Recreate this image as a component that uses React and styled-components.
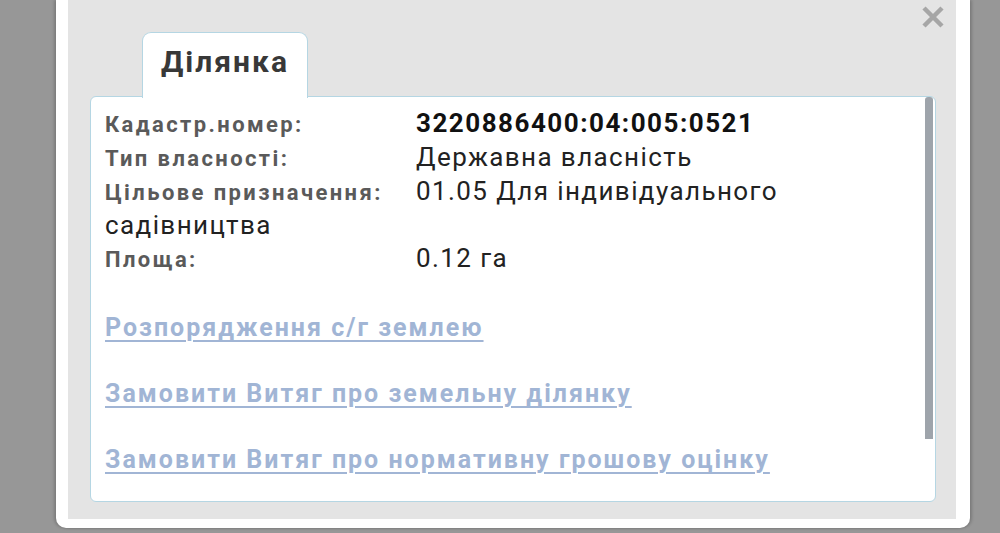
import React from "react";
import styled, { createGlobalStyle } from "styled-components";

const Global = createGlobalStyle`
  html, body { margin: 0; padding: 0; }
  body {
    width: 1000px;
    height: 533px;
    overflow: hidden;
    background: #979797;
    font-family: Roboto, "Noto Sans", "Liberation Sans", sans-serif;
  }
`;

const Page = styled.div`
  height: 533px;
  padding-left: 56px;
  box-sizing: border-box;
  display: flex;
  align-items: flex-start;
`;

const Dialog = styled.div`
  position: relative;
  width: 914px;
  height: 528px;
  box-sizing: border-box;
  background: #e4e4e4;
  border: 12px solid #ffffff;
  border-right-width: 14px;
  border-top: 0;
  border-bottom-width: 9px;
  border-radius: 0 0 10px 10px;
  box-shadow: -2px 0 3px rgba(0, 0, 0, 0.18), 2px 0 3px rgba(0, 0, 0, 0.18);
  padding: 32px 20px 0 22px;
  display: flex;
  flex-direction: column;
`;

const Close = styled.button`
  position: absolute;
  top: 5px;
  right: 11px;
  width: 24px;
  height: 24px;
  padding: 0;
  border: 0;
  background: transparent;
  display: flex;
`;

const TabBar = styled.div`
  display: flex;
  padding-left: 52px;
`;

const Tab = styled.div`
  position: relative;
  z-index: 1;
  height: 66px;
  box-sizing: border-box;
  margin-bottom: -2px;
  padding: 0 18px 8px 18px;
  display: flex;
  align-items: center;
  background: #ffffff;
  border: 1.5px solid #b5d6e3;
  border-bottom: 0;
  border-radius: 9px 9px 0 0;
  font-weight: 700;
  font-size: 30px;
  letter-spacing: 2px;
  color: #383838;
`;

const Panel = styled.div`
  position: relative;
  height: 406px;
  box-sizing: border-box;
  background: #ffffff;
  border: 1.5px solid #b5d6e3;
  border-radius: 6px;
  padding: 10px 14px;
`;

const Scrollbar = styled.div`
  position: absolute;
  top: 0;
  right: 2px;
  width: 8px;
  height: 342px;
  background: #9ea4ab;
  border-radius: 3px 3px 0 0;
`;

const Info = styled.div`
  line-height: 33px;
  font-size: 26px;
  color: #222222;
`;

const Row = styled.div`
  display: flex;
  align-items: baseline;
`;

const Label = styled.span`
  flex: 0 0 311px;
  font-size: 22px;
  font-weight: 700;
  letter-spacing: 2.4px;
  color: #5a5a5a;
`;

const Value = styled.span`
  font-weight: ${(p) => (p.$strong ? 700 : 400)};
  color: ${(p) => (p.$strong ? "#111111" : "#222222")};
  letter-spacing: ${(p) => (p.$strong ? "1.5px" : "1.4px")};
`;

const Links = styled.div`
  display: flex;
  flex-direction: column;
  gap: 33px;
  margin-top: 35px;
`;

const Link = styled.a`
  display: block;
  align-self: flex-start;
  line-height: 33px;
  font-size: 25px;
  font-weight: 700;
  letter-spacing: 2px;
  color: #a1b5d5;
  text-decoration: underline;
  text-decoration-thickness: 2px;
  text-underline-offset: 4px;
  cursor: pointer;
`;

const rows = [
  { label: "Кадастр.номер:", value: "3220886400:04:005:0521", strong: true },
  { label: "Тип власності:", value: "Державна власність" },
  { label: "Цільове призначення:", value: "01.05 Для індивідуального", more: "садівництва" },
  { label: "Площа:", value: "0.12 га" },
];

const links = [
  "Розпорядження с/г землею",
  "Замовити Витяг про земельну ділянку",
  "Замовити Витяг про нормативну грошову оцінку",
];

export default function App() {
  return (
    <>
      <Global />
      <Page>
        <Dialog>
          <Close aria-label="Закрити">
            <svg width="24" height="24" viewBox="0 0 24 24">
              <path d="M3 3 L21 21 M21 3 L3 21" stroke="#a6a6a6" strokeWidth="4.5" fill="none" />
            </svg>
          </Close>
          <TabBar>
            <Tab>Ділянка</Tab>
          </TabBar>
          <Panel>
            <Scrollbar />
            <Info>
              {rows.map((r) => (
                <React.Fragment key={r.label}>
                  <Row>
                    <Label>{r.label}</Label>
                    <Value $strong={r.strong}>{r.value}</Value>
                  </Row>
                  {r.more && (
                    <Row>
                      <Value>{r.more}</Value>
                    </Row>
                  )}
                </React.Fragment>
              ))}
            </Info>
            <Links>
              {links.map((l) => (
                <Link key={l}>{l}</Link>
              ))}
            </Links>
          </Panel>
        </Dialog>
      </Page>
    </>
  );
}
